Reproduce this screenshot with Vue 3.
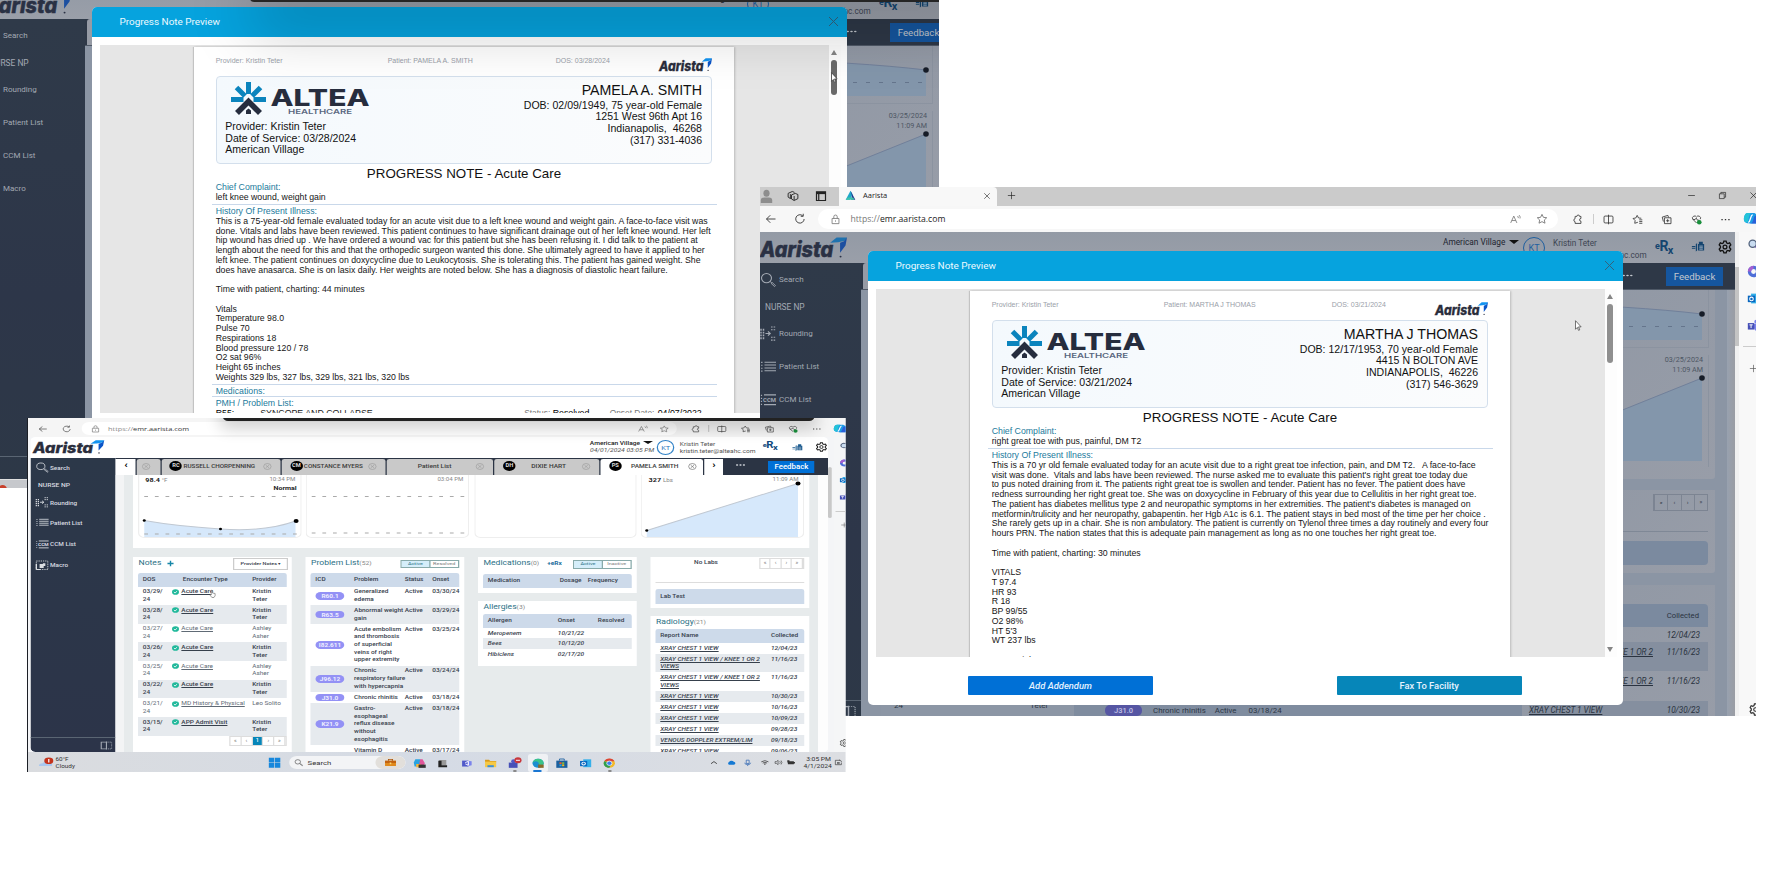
<script setup>
import { h } from 'vue'

const s = (d, extra = {}) => h('path', { d, fill: 'none', stroke: 'currentColor', 'stroke-width': 1.2, ...extra })
const f = (d, fill = 'currentColor') => h('path', { d, fill })
const icons = {
  back: () => [s('M14 8H2M7 3L2 8l5 5')],
  reload: () => [s('M13.5 8A5.6 5.6 0 1 1 11.5 3.6M12.3 1v3.4H9')],
  lock: () => [s('M3 6.5h10v7.5H3zM5.5 6.5V4a2.5 2.5 0 0 1 5 0v2.5'), f('M7.2 9.4h1.6V11H7.2z')],
  read: () => [s('M1 13L5.5 3 10 13M2.6 9.5h5.8M11 3c1 .8 1.2 2 1 3M13 1.5c1.8 1.5 2 3.500 1.500 5')],
  star: () => [s('M8 1.800l1.900 4 4.400.5-3.200 3 .9 4.300L8 11.500l-4 2.100.9-4.300-3.200-3 4.400-.5z')],
  puzzle: () => [s('M5 3.500h2a2 2 0 0 1 4 0h2v3a2 2 0 0 0 0 4v3.200H4.500v-2.500a2.300 2.300 0 0 1 0-4.500V3.500z')],
  split: () => [s('M1.500 4.500A1.500 1.500 0 0 1 3 3h10a1.500 1.500 0 0 1 1.500 1.500v7A1.500 1.500 0 0 1 13 13H3a1.500 1.500 0 0 1-1.500-1.500zM8 1v14')],
  favs: () => [s('M8.500 12L4 13.500l.5-4L1.500 6.500l4-.7L7.500 2l2 3.800 4 .4M10.500 8.500H15M10.500 11H15M10.500 13.500H15')],
  collect: () => [s('M5 5.500h9.500v8.500H5zM9.700 7.500v4.500M7.500 9.800H12M3.500 11L1.800 4.500 10 2l1 3')],
  heart: () => [s('M8 13L2.500 7.500a3 3 0 0 1 5.500-3 3 3 0 0 1 5.500 3M3 8h3l1.500-2 2 3H12'), h('circle', { cx: 12, cy: 12, r: 3.400, fill: '#1a8f3c' })],
  dots: () => [f('M2 7.200h2v1.800H2zM7 7.200h2v1.800H7zM12 7.200h2v1.800h-2z')],
  more: () => [2.5, 8, 13.5].map((cx) => h('circle', { cx, cy: 8, r: 1.9, fill: 'currentColor' })),
  copilot: () => [f('M5 1h8l3 2v10H8C4 13 1 12 1 8c0-2 1-7 4-7z', '#1c9be6'), f('M1 8c0-2 1-7 4-7h4C6 4 7 9 5 12 2 12 1 10 1 8z', '#24c3d8'), f('M8 13c2 0 3-1 4-5s2-4 4-4v9z', '#2b5fd8'), s('M6 12c3-1 2-8 5-9', { stroke: '#fff', 'stroke-width': 1.5 })],
  people: () => [h('circle', { cx: 8, cy: 4.500, r: 3.800, fill: '#8d8d8d' }), f('M1 15V12q0-3 4-3h6q4 0 4 3v3z', '#8d8d8d')],
  stack: () => [s('M6 6.500l5-2 3.500 1.500v5.500l-5 2.500L6 12zM9.500 8v5.500M4 11L1.500 9.500V4.500L7 2l3 1.200M4.500 5.500V12')],
  panel: () => [s('M2 2.500h12v11.500H2zM5 5v9', { 'stroke-width': 1.600 }), f('M2 2.500h12v3H2z')],
  favicon: () => [f('M8 1l3 5-4 8H1z', '#1fa6c9'), f('M8 1l7 13H9l1-6z', '#22348c'), f('M4 11h8l1.500 3H1z', '#3cc3a8')],
  x: () => [s('M2.500 2.500l11 11M13.500 2.500l-11 11')],
  plus: () => [s('M8 1.500v13M1.500 8h13')],
  minus: () => [s('M2 8h12')],
  restore: () => [s('M2.500 5h8.500v8.500H2.500zM5 5V2.500h8.500v8.500H11')],
  search: () => [h('circle', { cx: 6.500, cy: 6.500, r: 5, fill: 'none', stroke: 'currentColor', 'stroke-width': 1.100 }), s('M10 10l1.500 1.500M11 12l1-1 3.500 3.500-1 1z', { 'stroke-width': .9 })],
  rounding: () => [s('M1 3v11M3.500 3v11', { 'stroke-dasharray': '2 1', 'stroke-width': 1.500 }), s('M5.500 8h4.500M8 5.800L10.200 8 8 10.200'), s('M11 1h4.500M11 4h4.500M11 12h4.500M11 15h4.500', { 'stroke-dasharray': '1.600 1' })],
  list: () => [s('M4.500 3.500H16M4.500 6.500H16M4.500 9.500H16M4.500 12.500H16', { 'stroke-width': 1.100 }), s('M1.800 3v10.500', { 'stroke-dasharray': '1.200 1.900', 'stroke-width': 1.400 })],
  ccm: () => [s('M4 3H16M4 13.500H16'), s('M1.500 3v11', { 'stroke-dasharray': '1.200 2' }), h('text', { x: 3, y: 10.800, 'font-size': 6, 'font-weight': 700, fill: 'currentColor', textLength: 13, lengthAdjust: 'spacingAndGlyphs', 'font-family': 'Roboto' }, 'CCM')],
  macro: () => [s('M1 1.500h14v13H1z', { 'stroke-dasharray': '1.500 1.200' }), s('M1 14.500V6M1 14.500h5', { 'stroke-width': 1.600 }), f('M5 6h4V5h3v4h-2v3H5z')],
  collapse: () => [s('M1 2h7v12H1zM8 1v14', { 'stroke-width': 1.500 }), s('M8 2h7v12H8', { 'stroke-dasharray': '1.500 1' })],
  gear: () => [h('circle', { cx: 8, cy: 8, r: 2.200, fill: 'none', stroke: 'currentColor', 'stroke-width': 1.400 }), s('M6.700 1.200h2.600l.5 2 1.500.8 2-.7 1.300 2.300-1.400 1.500v1.800l1.400 1.500-1.300 2.300-2-.7-1.500.8-.5 2H6.700l-.5-2-1.500-.8-2 .7-1.300-2.300 1.400-1.500V7.100L1.400 5.600l1.300-2.300 2 .7 1.500-.8z', { 'stroke-width': 1.500 })],
  fax: () => [f('M5.500 5l1.500-1v9l-1.500 1zM8 5h1V2h4.500v3H15v8H8z'), f('M1 7.500h4v1.500H1zM1 10h4v1.200H1z'), s('M9.500 7.500h4M9.500 9.500h4M9.500 11.300h4', { stroke: '#b8c4d2', 'stroke-width': .9 })],
  check: () => [h('circle', { cx: 8, cy: 8, r: 7.500, fill: '#1fb89a' }), s('M4.500 8.200l2.500 2.500 4.500-5', { stroke: '#fff', 'stroke-width': 2 })],
  closeTab: () => [h('circle', { cx: 8, cy: 8, r: 6.800, fill: 'none', stroke: 'currentColor', 'stroke-width': 1.300 }), s('M5 5l6 6M11 5l-6 6')],
  hand: () => [h('path', { d: 'M6 8V2.500q1-1 2 0V7l5 1v4l-2 3H7L3.500 10.500q0-1.500 2.500-.5z', fill: '#fff', stroke: '#555', 'stroke-width': 1 })],
  arrow: () => [h('path', { d: 'M4 1l9 9H8.800l2 4.300-1.900.8-2-4.300L4 13.500z', fill: '#fff', stroke: '#333', 'stroke-width': 1 })],
  mag: () => [h('circle', { cx: 7, cy: 7, r: 4.500, fill: '#c9dcf0', stroke: '#53637d', 'stroke-width': 1.600 }), s('M10.500 10.500L15 15', { stroke: '#6a4fae', 'stroke-width': 2 })],
  loop: () => [h('circle', { cx: 8, cy: 8, r: 5, fill: 'none', stroke: '#4f6fd8', 'stroke-width': 4 }), s('M3 8a5 5 0 0 1 5-5', { stroke: '#a65fd0', 'stroke-width': 4 })],
  outlook: () => [f('M5 2h10v12H5z', '#35b0ea'), f('M1 4.500h9v8H1z', '#0a67bf'), h('circle', { cx: 5.500, cy: 8.500, r: 2.200, fill: 'none', stroke: '#fff', 'stroke-width': 1.300 })],
  teams: () => [h('circle', { cx: 11.500, cy: 3.500, r: 2.500, fill: '#7b83eb' }), f('M6 6h9v6q-2 3-5 2z', '#7b83eb'), f('M1 5h8v8H1z', '#4650b8'), s('M3 7.200h4M5 7.200v4', { stroke: '#fff' })],
  win: () => [f('M1 1h6.600v6.600H1zM8.400 1H15v6.600H8.400zM1 8.400h6.600V15H1zM8.400 8.400H15V15H8.400z', '#1787dc')],
  brief: () => [f('M1 5h14v9H1z', '#e08a1c'), f('M1 5h14v4H1z', '#c2620f'), s('M5.500 5V2.500h5V5', { stroke: '#b05a10', 'stroke-width': 1.500 }), f('M7 8h2v3H7z', '#f7d774')],
  copilotPre: () => [f('M3 2h6l2 4-5 7H2L1 7z', '#29a3e0'), f('M9 2h3l3 6-3 6H7z', '#e2569b'), f('M4 9h6l-2 5H4z', '#f3b53a'), f('M7 10h9v5H7z', '#333')],
  task: () => [f('M3 3h9v8H3z', '#999'), f('M2 11h11v3H2zM2 4h4v10H2z', '#222')],
  chat: () => [f('M2 4h8v9H2z', '#5059c9'), f('M8 4l6 1v6l-6 2z', '#7b83eb'), s('M6 7l4-2v6L6 9', { stroke: '#fff' })],
  folder: () => [f('M1 2.500h5l1.500 2H15v2H1z', '#d99a1a'), f('M1 5.500h14V14H1z', '#f6c945'), f('M4 11h8v3H4z', '#3d8fd8')],
  teamsBusy: () => [h('circle', { cx: 7, cy: 5, r: 3, fill: '#5059c9' }), f('M1 7h11v8H1z', '#4650b8'), h('circle', { cx: 12.5, cy: 3.5, r: 4.5, fill: '#c8373c' }), s('M10 3.500h5', { stroke: '#fff', 'stroke-width': 1.500 })],
  edge: () => [h('circle', { cx: 8, cy: 8, r: 7, fill: '#1b8fd0' }), f('M1 8a7 7 0 0 1 14 0q0 3-4 3-3 0-2-3-1-3-4-3-3 0-4 3z', '#3bc48a'), f('M8 10h7v5H8z', '#8a6a2a')],
  store: () => [f('M1 4h14v11H1z', '#1b5f9e'), s('M5 4V1.500h6V4', { stroke: '#1b5f9e' }), f('M5 6.500h2.700v2.700H5z', '#f05a28'), f('M8.300 6.500H11v2.700H8.300z', '#7db93f'), f('M5 9.800h2.700v2.700H5z', '#2aa7e0'), f('M8.300 9.800H11v2.700H8.300z', '#f9ba16')],
  chrome: () => [h('circle', { cx: 8, cy: 8, r: 7, fill: '#f2b92a' }), f('M1.500 5A7 7 0 0 1 14.500 5H8z', '#dc4437'), f('M1.500 5A7 7 0 0 0 8 15l2-5-2-3z', '#2f9e4f'), h('circle', { cx: 8, cy: 8, r: 3.300, fill: '#3b7ded', stroke: '#fff', 'stroke-width': 1 })],
  up: () => [s('M3 10l5-4.500 5 4.500', { 'stroke-width': 1.600 })],
  cloud: () => [f('M4 12.500a3.500 3.500 0 0 1 0-6A4.500 4.500 0 0 1 12 6a3.300 3.300 0 0 1 0 6.500z', '#1579d3')],
  mic: () => [s('M5.500 2.500h5v7h-5zM3 8q0 4 5 4t5-4M8 12v3', { stroke: '#3c6fb5', 'stroke-width': 1.500 })],
  wifi: () => [s('M1.500 6.500Q8 1 14.500 6.500M4 9.300Q8 6 12 9.300', { 'stroke-width': 1.500 }), f('M6 11l2 2.500L10 11Q8 9.800 6 11z')],
  sound: () => [s('M1.500 6h2.500l3-3v10l-3-3H1.500zM10 5q2 3 0 6M12.500 3.500q3 4.500 0 9')],
  battery: () => [f('M2 5h11v7H2zM13 7h2v3h-2zM1 3h4v5H1z')],
  bell: () => [s('M2 3h9M2 3v10h11V8M9 2l5 4M5 8h5M5 10.500h5', { 'stroke-width': 1.300 })],
  weather: () => [f('M1 13q0-4 4-4 3-5 8-2l2 2v4z', '#a9c8f0'), h('circle', { cx: 11.500, cy: 5.500, r: 4.800, fill: '#c4341d' }), s('M11.500 3v5', { stroke: '#fff', 'stroke-width': 1.300 })],
}
const Icon = (p) => h('svg', { viewBox: '0 0 16 16', preserveAspectRatio: 'none' }, icons[p.name]())
Icon.props = ['name']

const Brand = (p) => h('svg', { viewBox: '0 0 88 23', preserveAspectRatio: 'none' }, [
  h('text', { x: 0, y: 21.300, 'font-family': 'Inter, sans-serif', 'font-weight': 800, 'font-style': 'italic', 'font-size': 22, textLength: 74, lengthAdjust: 'spacingAndGlyphs', fill: p.ink, stroke: p.ink, 'stroke-width': .5 }, 'Aarista'),
  h('path', { d: 'M71 6L77.500.5H88L86 4 79 5.500z', fill: p.light }),
  h('path', { d: 'M88 .5L86.500 9 81 16.500V6L85 4.500z', fill: p.deep }),
  h('circle', { cx: 81.500, cy: 20.500, r: 1, fill: p.ink }),
])
Brand.props = ['ink', 'light', 'deep']

const Altea = () => h('svg', { viewBox: '0 0 139 33' }, [
  h('g', { stroke: '#0b84bd', 'stroke-width': 5 }, [
    h('path', { d: 'M17.500 0v12M0 17.500h12.500M22.500 17.500h12.500M5.500 5.500l8.500 8.500M29.500 5.500l-8.500 8.500' }),
  ]),
  h('path', { d: 'M6 31L17.500 19.500 29 31', fill: 'none', stroke: '#262d3e', 'stroke-width': 5.6 }),
  h('path', { d: 'M15 32v-3.500l2.500-2 2.500 2v3.500z', fill: '#262d3e' }),
  h('text', { x: 39.500, y: 24, 'font-family': 'Inter, sans-serif', 'font-weight': 800, 'font-size': 22.500, textLength: 99, lengthAdjust: 'spacingAndGlyphs', fill: '#262d3e' }, 'ALTEA'),
  h('text', { x: 57, y: 32.200, 'font-family': 'Inter, sans-serif', 'font-weight': 600, 'font-size': 6.300, textLength: 64, lengthAdjust: 'spacingAndGlyphs', fill: '#596780' }, 'HEALTHCARE'),
])

const previews = [
  {
    id: 'pamela', patient: 'PAMELA A. SMITH', date: '03/28/2024',
    address: ['DOB: 02/09/1949, 75 year-old Female', '1251 West 96th Apt 16', 'Indianapolis,\u00a0 46268', '(317) 331-4036'],
    complaint: 'left knee wound, weight gain',
    history: [
      'This is a 75-year-old female evaluated today for an acute visit due to a left knee wound and weight gain. A face-to-face visit was',
      'done. Vitals and labs have been reviewed. This patient continues to have significant drainage out of her left knee wound. Her left',
      'hip wound has dried up . We have ordered a wound vac for this patient but she has been refusing it. I did talk to the patient at',
      'length about the need for this and that the orthopedic surgeon wanted this done. She ultimately agreed to have it applied to her',
      'left knee. The patient continues on doxycycline due to Leukocytosis. She is tolerating this. The patient has gained weight. She',
      'does have anasarca. She is on lasix daily. Her weights are noted below. She has a diagnosis of diastolic heart failure.',
      '', 'Time with patient, charting: 44 minutes', '', 'Vitals', 'Temperature 98.0', 'Pulse 70', 'Respirations 18',
      'Blood pressure 120 / 78', 'O2 sat 96%', 'Height 65 inches', 'Weights 329 lbs, 327 lbs, 329 lbs, 321 lbs, 320 lbs',
    ],
    problems: true,
  },
  {
    id: 'martha', patient: 'MARTHA J THOMAS', date: '03/21/2024',
    address: ['DOB: 12/17/1953, 70 year-old Female', '4415 N BOLTON AVE', 'INDIANAPOLIS,\u00a0 46226', '(317) 546-3629'],
    complaint: 'right great toe with pus, painful, DM T2',
    history: [
      'This is a 70 yr old female evaluated today for an acute visit due to a right great toe infection, pain, and DM T2.\u00a0\u00a0 A face-to-face',
      'visit was done.\u00a0 Vitals and labs have been reviewed. The nurse asked me to evaluate this patient\'s right great toe today due',
      'to pus noted draining from it. The patients right great toe is swollen and tender. Patient has no fever. The patient does have',
      'redness surrounding her right great toe. She was on doxycycline in February of this year due to Cellulitis in her right great toe.',
      'The patient has diabetes mellitus type 2 and neuropathic symptoms in her extremities. The patient\'s diabetes is managed on',
      'metformin/trulicity and her neuropathy, gabapentin. her Hgb A1c is 6.1. The patient stays in bed most of the time per her choice .',
      'She rarely gets up in a chair. She is non ambulatory. The patient is currently on Tylenol three times a day routinely and every four',
      'hours PRN. The nation states that this is adequate pain management as long as no one touches her right great toe.',
      '', 'Time with patient, charting: 30 minutes', '', 'VITALS', 'T 97.4', 'HR 93', 'R 18', 'BP 99/55', 'O2 98%', 'HT 5\'3', 'WT 237 lbs', '',
      '\u00a0\u00a0\u00a0\u00a0\u00a0\u00a0\u00a0\u00a0weights: 23, 24, 23, 137, 112, 157',
    ],
    problems: false,
  },
]

const nav = [['rounding', 'Rounding'], ['list', 'Patient List'], ['ccm', 'CCM List'], ['macro', 'Macro']]
const browserIcons = ['split', 'favs', 'collect', 'heart', 'dots']
const studies = [['XRAY CHEST 1 VIEW', '12/04/23'], ['XRAY CHEST 1 VIEW / KNEE 1 OR 2', '11/16/23', 'VIEWS'], ['XRAY CHEST 1 VIEW / KNEE 1 OR 2', '11/16/23', 'VIEWS'], ['XRAY CHEST 1 VIEW', '10/30/23']]
const radiology = [...studies, ['XRAY CHEST 1 VIEW', '10/16/23'], ['XRAY CHEST 1 VIEW', '10/09/23'], ['XRAY CHEST 1 VIEW', '09/28/23'], ['VENOUS DOPPLER EXTREM/LIM', '09/18/23'], ['XRAY CHEST 1 VIEW', '09/06/23']]
const tabs = [
  { c: 't0', label: '' }, { c: 't1', who: 'RC', label: 'RUSSELL CHORPENNING' }, { c: 't2', who: 'CM', label: 'CONSTANCE MYERS' },
  { c: 't3', label: 'Patient List' }, { c: 't4', who: 'DH', label: 'DIXIE HART' }, { c: 't5', who: 'PS', label: 'PAMELA SMITH' },
]
const notes = [
  ['03/29/', 'Acute Care', 'Kristin', 'Teter', 1], ['03/28/', 'Acute Care', 'Kristin', 'Teter', 1], ['03/27/', 'Acute Care', 'Ashley', 'Asher', 0],
  ['03/26/', 'Acute Care', 'Kristin', 'Teter', 1], ['03/25/', 'Acute Care', 'Ashley', 'Asher', 0], ['03/22/', 'Acute Care', 'Kristin', 'Teter', 1],
  ['03/21/', 'MD History & Physical', 'Leo Solito', '', 0], ['03/15/', 'APP Admit Visit', 'Kristin', 'Teter', 1],
]
const problems = [
  ['R60.1', ['Generalized', 'edema'], '03/30/24'], ['R63.5', ['Abnormal weight', 'gain'], '03/29/24'],
  ['I82.611', ['Acute embolism', 'and thrombosis', 'of superficial', 'veins of right', 'upper extremity'], '03/25/24'],
  ['J96.12', ['Chronic', 'respiratory failure', 'with hypercapnia'], '03/24/24'], ['J31.0', ['Chronic rhinitis'], '03/18/24'],
  ['K21.9', ['Gastro-', 'esophageal', 'reflux disease', 'without', 'esophagitis'], '03/18/24'], ['', ['Vitamin D'], '03/17/24'],
]
const allergies = [['Meropenem', '10/21/22'], ['Bees', '10/12/20'], ['Hibiclens', '02/17/20']]
const taskIcons = ['copilotPre', 'task', 'chat', 'folder', 'teamsBusy', 'edge', 'store', 'outlook', 'chrome']
</script>

<template>
  <main class="desk">
    <section v-for="p in previews" :key="p.id" class="win" :class="p.id">
      <div class="stage">
        <div class="titlebar">
          <Icon name="people" class="i16" /><Icon name="stack" class="i12" /><Icon name="panel" class="i12" />
          <div class="tab"><Icon name="favicon" class="i11" /><span>Aarista</span><Icon name="x" class="i7" /></div>
          <Icon name="plus" class="i9" />
          <div class="controls"><Icon name="minus" class="i9" /><Icon name="restore" class="i9" /><Icon name="x" class="i9" /></div>
        </div>
        <div class="address">
          <Icon name="back" class="i12" /><Icon name="reload" class="i12 rl" />
          <div class="pill"><Icon name="lock" class="i11" /><span class="url"><i>https://</i>emr.aarista.com</span><Icon name="read" class="i11 push" /><Icon name="star" class="i12" /></div>
          <Icon name="puzzle" class="i11 pz" /><b class="vbar"></b>
          <div class="tools"><Icon v-for="n in browserIcons" :key="n" :name="n" class="i11" /></div>
          <Icon name="copilot" class="i14" />
        </div>
        <div class="body">
          <div class="app">
            <header class="top">
              <Brand class="brand" ink="#2a3144" light="#1f72ae" deep="#1c4fa0" />
              <div class="site">American Village <em></em></div>
              <div class="avatar">KT</div>
              <div class="who"><span>Kristin Teter</span><span>kristin.teter@alteahc.com</span></div>
              <div class="rx"><small>e</small>R<sub>x</sub></div><Icon name="fax" class="fax" /><Icon name="gear" class="gear" />
            </header>
            <div class="cols">
              <nav class="side">
                <div class="srow search"><Icon name="search" /><span>Search</span></div>
                <div class="srow head">NURSE NP</div>
                <div v-for="n in nav" :key="n[1]" class="srow"><Icon :name="n[0]" /><span>{{ n[1] }}</span></div>
                <div class="sfoot"><Icon name="collapse" /></div>
              </nav>
              <div class="main">
                <div class="navbar"><i class="sliver"></i><Icon name="more" class="more" /><span class="feedback">Feedback</span></div>
                <div class="content">
                  <div class="lower">
                    <div class="lnotes"><span>24</span><span>Teter</span></div>
                    <div class="lprob"><b>J31.0</b><span>Chronic rhinitis</span><span>Active</span><span>03/18/24</span></div>
                  </div>
                  <div class="right">
                    <div class="card vit">
                      <svg viewBox="0 0 190 189" class="chart">
                        <path d="M0 13Q110 16 177 24V50H0z" fill="#8396ab" /><path d="M0 13Q110 16 177 24" fill="none" stroke="#71809a" />
                        <path d="M0 36.500h177" stroke="#65758c" stroke-dasharray="4 9" /><path d="M183.500 0v58M0 57.500h183" stroke="#8b93a0" fill="none" />
                        <circle cx="177" cy="24" r="2.800" fill="#161c27" /><path d="M183.500 65v112" stroke="#8b93a0" />
                        <path d="M0 158L100 119 177 88V171H0z" fill="#8396ab" /><path d="M0 158L100 119 177 88" stroke="#71809a" fill="none" /><circle cx="177" cy="88" r="2.800" fill="#161c27" />
                      </svg>
                      <div class="stamp"><span>03/25/2024</span><span>11:09 AM</span></div>
                    </div>
                    <div class="card labs"><div class="pager"><i>«</i><i>‹</i><i>›</i><i>»</i></div><hr /><div class="bar"></div></div>
                    <div class="card rad">
                      <div class="bar"><span>Collected</span></div>
                      <div v-for="(r, i) in studies" :key="i" class="rrow" :class="{ tall: r[2] }"><u>{{ r[0] }}</u><span>{{ r[1] }}</span></div>
                    </div>
                  </div>
                  <i class="gutter"></i>
                </div>
              </div>
            </div>
          </div>
          <div class="vscroll"><i></i></div>
          <div class="rail"><Icon name="mag" /><Icon name="loop" /><Icon name="outlook" /><Icon name="teams" /><hr /><Icon name="plus" class="pl" /><Icon name="gear" class="gr" /></div>
        </div>
        <div class="strip"><i></i></div>

        <div class="modal">
          <div class="mhead"><span>Progress Note Preview</span><Icon name="x" /></div>
          <div class="viewer">
            <div class="well">
              <article class="page">
                <div class="run"><span>Provider: Kristin Teter</span><span>Patient: {{ p.patient }}</span><span>DOS: {{ p.date }}</span><Brand class="pbrand" ink="#2a2d3c" light="#1293f0" deep="#0a55c8" /></div>
                <div class="card-id">
                  <div class="prov"><Altea class="altea" /><span>Provider: Kristin Teter</span><span>Date of Service: {{ p.date }}</span><span>American Village</span></div>
                  <div class="pat"><strong>{{ p.patient }}</strong><span v-for="a in p.address" :key="a">{{ a }}</span></div>
                </div>
                <h1>PROGRESS NOTE - Acute Care</h1>
                <div class="sec first"><h2>Chief Complaint:</h2><p>{{ p.complaint }}</p></div>
                <div class="sec hist"><h2>History Of Present Illness:</h2><p v-for="(l, i) in p.history" :key="i">{{ l }}</p></div>
                <template v-if="p.problems">
                  <div class="sec meds"><h2>Medications:</h2></div>
                  <div class="sec pmh"><h2>PMH / Problem List:</h2><div class="prow"><b>R55:</b><span>SYNCOPE AND COLLAPSE</span><i>Status:</i><b>Resolved</b><i>Onset Date:</i><b>04/07/2022</b></div></div>
                </template>
              </article>
            </div>
            <div class="track"><i class="au"></i><i class="thumb"></i><i class="ad"></i></div>
          </div>
          <div class="mfoot"><button class="b1">Add Addendum</button><button class="b2">Fax To Facility</button></div>
          <Icon name="arrow" class="cursor" />
        </div>
      </div>
      <div v-if="p.problems" class="share"></div>
    </section>

    <section class="chart-win">
      <div class="cw">
        <div class="caddr">
          <Icon name="back" /><Icon name="reload" />
          <div class="cpill"><Icon name="lock" /><span><i>https://</i>emr.aarista.com</span><Icon name="read" class="push" /><Icon name="star" /></div>
          <Icon name="puzzle" class="cpz" /><b></b>
          <div class="ctools"><Icon v-for="n in browserIcons" :key="n" :name="n" /></div><Icon name="copilot" class="ccp" />
        </div>
        <div class="cbody">
          <div class="capp">
            <header class="chead">
              <Brand class="cbrand" ink="#2a2d3c" light="#1293f0" deep="#0a55c8" />
              <div class="csite"><span>American Village <em></em></span><i>04/01/2024 03:05 PM</i></div>
              <div class="cav">KT</div>
              <div class="cwho"><span>Kristin Teter</span><span>kristin.teter@alteahc.com</span></div>
              <div class="crx"><small>e</small>R<sub>x</sub></div><Icon name="fax" class="cfax" /><Icon name="gear" class="cgear" />
            </header>
            <div class="ccols">
              <nav class="cside">
                <div class="srow search"><Icon name="search" /><span>Search</span></div>
                <div class="srow head">NURSE NP</div>
                <div v-for="n in nav" :key="n[1]" class="srow"><Icon :name="n[0]" /><span>{{ n[1] }}</span></div>
                <div class="sfoot"><Icon name="collapse" /></div>
              </nav>
              <div class="cmain">
                <div class="ctabs">
                  <span class="step">‹</span>
                  <span v-for="t in tabs" :key="t.c" class="ctab" :class="t.c"><b v-if="t.who">{{ t.who }}</b><span v-if="t.label">{{ t.label }}</span><Icon name="closeTab" /></span>
                  <span class="step nx">›</span><Icon name="more" class="cmore" /><span class="cfb">Feedback</span>
                </div>
                <div class="cscroll">
                  <div class="vitals">
                    <div class="vcard">
                      <svg viewBox="0 0 131 63" preserveAspectRatio="none"><path d="M5 45.500Q30 51 66 54T126 46V62H5z" fill="#d6e8fb" /><path d="M5 45.500Q30 51 66 54T126 46" fill="none" stroke="#c0c8d2" /><path d="M5 21.500h122M5 59h122" stroke="#aaa" stroke-dasharray="3 5.500" /><circle cx="5" cy="45.500" r="1.200" /><circle cx="66" cy="54" r="1.200" /><circle cx="126.500" cy="46" r="2" /></svg>
                      <div class="vt"><strong>98.4 <small>°F</small></strong><span>10:34 PM<b>Normal</b></span></div>
                    </div>
                    <div class="vcard">
                      <svg viewBox="0 0 131 63" preserveAspectRatio="none"><path d="M5 21.500h122M5 58h122" stroke="#aaa" stroke-dasharray="3 5.500" /></svg>
                      <div class="vt"><span>03:04 PM</span></div>
                    </div>
                    <div class="vcard"></div>
                    <div class="vcard">
                      <svg viewBox="0 0 131 63" preserveAspectRatio="none"><path d="M5 55.500L126 8.500V62H5z" fill="#d6e8fb" /><path d="M5 55.500L126 8.500" stroke="#c0c8d2" /><circle cx="5" cy="55.500" r="1.200" /><circle cx="126" cy="8.500" r="2" /></svg>
                      <div class="vt"><strong>327 <small>Lbs</small></strong><span>11:09 AM</span></div>
                    </div>
                  </div>
                  <div class="panels">
                    <div class="panel pnotes">
                      <div class="ph"><h3>Notes</h3><Icon name="plus" class="add" /><span class="drop">Provider Notes ▾</span></div>
                      <div class="th g-notes"><span>DOS</span><span>Encounter Type</span><span>Provider</span></div>
                      <div v-for="(n, i) in notes" :key="i" class="tr g-notes" :class="{ alt: i % 2, lite: !n[4] }"><span>{{ n[0] }}<br />24</span><span class="enc"><Icon name="check" /><u>{{ n[1] }}</u></span><span>{{ n[2] }}<br />{{ n[3] }}</span></div>
                      <div class="pg"><i>«</i><i>‹</i><i class="on">1</i><i>›</i><i>»</i></div>
                      <Icon name="hand" class="hand" />
                    </div>
                    <div class="panel pprob">
                      <div class="ph"><h3>Problem List<small>(52)</small></h3><span class="tog"><i class="on">Active</i><i>Resolved</i></span></div>
                      <div class="th g-prob"><span>ICD</span><span>Problem</span><span>Status</span><span>Onset</span></div>
                      <div v-for="(r, i) in problems" :key="i" class="tr g-prob" :class="{ alt: i % 2 }"><span class="code"><b v-if="r[0]">{{ r[0] }}</b></span><span><template v-for="l in r[1]" :key="l">{{ l }}<br /></template></span><span>Active</span><span>{{ r[2] }}</span></div>
                    </div>
                    <div class="stackp">
                      <div class="panel pmeds">
                        <div class="ph"><h3>Medications<small>(0)</small></h3><span class="miniRx">+eRx</span><span class="tog"><i class="on">Active</i><i>Inactive</i></span></div>
                        <div class="th g-med"><span>Medication</span><span>Dosage</span><span>Frequency</span></div>
                      </div>
                      <div class="panel pall">
                        <div class="ph"><h3>Allergies<small>(3)</small></h3></div>
                        <div class="th g-all"><span>Allergen</span><span>Onset</span><span>Resolved</span></div>
                        <div v-for="(a, i) in allergies" :key="i" class="tr g-all" :class="{ alt: i % 2 }"><span>{{ a[0] }}</span><span>{{ a[1] }}</span></div>
                      </div>
                    </div>
                    <div class="stackp">
                      <div class="panel plabs">
                        <div class="nolabs"><span>No Labs</span><div class="pg"><i>«</i><i>‹</i><i>›</i><i>»</i></div></div><hr />
                        <div class="th"><span>Lab Test</span></div>
                      </div>
                      <div class="panel prad">
                        <div class="ph"><h3>Radiology<small>(21)</small></h3></div>
                        <div class="th g-rad"><span>Report Name</span><span>Collected</span></div>
                        <div v-for="(r, i) in radiology" :key="i" class="tr g-rad" :class="{ alt: i % 2 }"><u>{{ r[0] }}<template v-if="r[2]"><br />{{ r[2] }}</template></u><span>{{ r[1] }}</span></div>
                      </div>
                    </div>
                  </div>
                </div>
              </div>
            </div>
          </div>
          <div class="cvs"><i></i></div>
          <div class="crail"><Icon name="mag" /><Icon name="loop" /><Icon name="outlook" /><Icon name="teams" /><hr /><Icon name="plus" class="pl" /><Icon name="gear" class="gr" /></div>
        </div>
        <div class="taskbar">
          <Icon name="weather" class="wi" /><div class="wt"><span>60°F</span><span>Cloudy</span></div>
          <Icon name="win" class="start" />
          <div class="find"><Icon name="search" /><span>Search</span><b><Icon name="brief" /></b></div>
          <div class="apps"><span v-for="t in taskIcons" :key="t" :class="{ open: t === 'edge', run: t === 'teamsBusy' || t === 'chrome' }"><Icon :name="t" /></span></div>
          <div class="tray"><Icon v-for="t in ['up', 'cloud', 'mic']" :key="t" :name="t" /></div>
          <div class="tray2"><Icon v-for="t in ['wifi', 'sound', 'battery']" :key="t" :name="t" /></div>
          <div class="clock"><span>3:05 PM</span><span>4/1/2024</span></div><Icon name="bell" class="bell" />
        </div>
        <div class="share3"></div>
      </div>
    </section>
  </main>
</template>

<style>
body { margin: 0; background: #fff; }
</style>

<style scoped>
* { box-sizing: border-box; }
svg { display: block; flex: none; overflow: visible; }
i, em { font-style: normal; }
.desk { position: relative; width: 1781px; height: 870px; overflow: hidden; background: #fff; font-family: Roboto, "Liberation Sans", sans-serif; }
.win { position: absolute; overflow: hidden; }
.pamela { left: 0; top: 0; width: 939px; height: 488px; }
.martha { left: 760px; top: 187px; width: 996px; height: 529px; }
.stage { position: relative; width: 997px; height: 545px; display: flex; flex-direction: column; }
.pamela .stage { margin: -57px 0 0 -16px; }

.i16 { width: 13px; height: 15px; } .i12 { width: 12px; height: 12px; } .i11 { width: 11px; height: 11px; } .i14 { width: 14px; height: 14px; }
.i9 { width: 9px; height: 9px; } .i7 { width: 8px; height: 8px; }
.titlebar { height: 19px; flex: none; background: #cbcbcb; display: flex; align-items: center; color: #222; }
.titlebar > .i12 { margin-left: 14px; margin-top: -1px; } .titlebar > .i12 + .i12 { margin-left: 16px; }
.tab { margin-left: 12px; width: 158px; height: 19px; background: #f8f8f8; border-radius: 0 4px 0 0; display: flex; align-items: center; padding: 0 6px; font: 8px "Open Sans", sans-serif; }
.tab span { margin-left: 7px; flex: 1; font-size: 7.500px; margin-top: -3px; }
.tab svg { margin-top: -2px; }
.titlebar > .i9 { margin-left: 10px; margin-top: -2px; }
.controls { margin-left: auto; display: flex; gap: 22px; margin-right: -1px; margin-top: -3px; }
.address { height: 26px; flex: none; background: #f7f7f7; display: flex; align-items: center; color: #333; }
.address > .i12:first-child { margin-left: 5px; }
.rl { margin-left: 17px; }
.pill { margin-left: 12px; width: 740px; height: 20px; border-radius: 10px; background: #fff; display: flex; align-items: center; padding: 0 10px 0 12px; color: #777; }
.url { margin-left: 9.500px; font: 8.650px "Open Sans", sans-serif; color: #222; }
.url i { color: #777; }
.push { margin-left: auto; margin-right: 15px; }
.pz { margin-left: 14px; } .vbar { width: 1px; height: 10px; background: #ccc; margin: 0 9px 0 10px; }
.tools { display: flex; gap: 18.200px; }
.address .i14 { margin-left: 12px; }
.body { display: flex; height: 490.500px; flex: none; }
.strip { flex: 1; background: #c6c8cc; border-top: 1px solid #e0e0e0; padding-left: 14px; }
.strip i { display: block; width: 9px; height: 9px; border-radius: 50%; background: #c8402c; margin-top: 5px; }

.app { width: 975px; display: flex; flex-direction: column; background: #8b95a4; }
.top { height: 31px; background: linear-gradient(#939aa5, #9a9fa9); display: flex; align-items: flex-start; position: relative; color: #1d2430; }
.brand { width: 87px; height: 22px; margin: 5px 0 0 0; }
.site { margin-left: 596px; padding-top: 5px; font-size: 8.300px; white-space: nowrap; width: 75px; }
.site em { display: inline-block; border: 5px solid transparent; border-top: 4px solid #111; border-bottom: 0; margin-left: 2px; vertical-align: 1px; }
.avatar { width: 22px; height: 22px; border: 1.200px solid #1f5f9f; border-radius: 50%; margin: 5px 0 0 5px; color: #1f5f9f; font-size: 9px; line-height: 20px; text-align: center; flex: none; }
.who { margin-left: 8px; padding-top: 5px; width: 91px; font-size: 8.200px; color: #3d4452; display: flex; flex-direction: column; line-height: 12px; white-space: nowrap; flex: none; }
.rx, .crx { font-weight: 700; color: #15456f; }
.rx { margin: 5px 0 0 11px; font-size: 14px; line-height: 18px; width: 18px; white-space: nowrap; letter-spacing: -.5px; }
.rx small { font-size: 9px; vertical-align: 2px; } .rx sub { font-size: 11px; vertical-align: -3px; }
.fax { width: 14px; height: 13px; margin: 8px 0 0 18px; color: #15456f; }
.gear { width: 14px; height: 14px; margin: 8px 0 0 13px; color: #111; }
.cols { flex: 1; display: flex; min-height: 0; }
.side { width: 101px; background: linear-gradient(#2f3a49, #2d3649 60%, #2d3847); display: flex; flex-direction: column; color: #a3a9b3; font-size: 8px; }
.srow { display: flex; align-items: center; height: 33px; white-space: nowrap; }
.side .srow svg { width: 16px; height: 15px; margin: 0 3px 0 0; }
.side .search { height: 32px; } .side .search svg { width: 16px; }
.side .head { height: 24px; padding-left: 5px; font-size: 8.400px; }
.side .head + .srow { height: 29px; margin-bottom: 2px; }
.sfoot { margin-top: auto; border-top: 1px solid #5a6573; height: 23px; display: flex; justify-content: flex-end; padding: 4px 5px 0 0; color: #a3a9b3; }
.sfoot svg { width: 15px; height: 13px; }
.main { flex: 1; display: flex; flex-direction: column; min-width: 0; }
.navbar { height: 27px; flex: none; background: #2e3847; display: flex; align-items: center; border-bottom: 1px solid #4f5967; color: #c4c8ce; }
.sliver { width: 12px; height: 26px; background: #969ba5; margin-left: 2px; border-radius: 3px 0 0 0; flex: none; }
.more { margin-left: 747px; width: 11px; height: 7px; margin-top: -2px; }
.feedback { margin-left: 33px; width: 57px; height: 19px; background: #15569f; font-size: 9.700px; line-height: 20px; text-align: center; margin-top: 1px; }
.content { flex: 1; display: flex; min-height: 0; overflow: hidden; background: #8b95a4; }
.lower { margin-top: 413px; height: 20px; display: flex; font-size: 8px; color: #2c3644; width: 641px; margin-left: 20px; gap: 20px; background: #7f8c9f; flex: none; white-space: nowrap; }
.lnotes { width: 193px; background: #8c96a5; padding-left: 13px; display: flex; gap: 127px; line-height: 5px; overflow: hidden; }
.lprob { display: flex; align-items: center; padding-left: 11px; height: 15px; }
.lprob b { width: 37px; height: 11px; border-radius: 5px; background: #5656a3; color: #c3c3e6; font-weight: 500; text-align: center; line-height: 12px; font-size: 7.500px; margin-right: 11px; }
.lprob span { font-size: 7.900px; margin-right: 9px; } .lprob span + span + span { margin-left: 3px; }
.right { width: 193px; flex: none; display: flex; flex-direction: column; font-size: 8px; color: #2a3340; }
.card { background: linear-gradient(135deg, #8f97a4, #989da8); position: relative; flex: none; border-radius: 0 0 3px 3px; }
.vit { height: 189px; } .chart { width: 193px; height: 189px; padding-left: 3px; }
.stamp { position: absolute; right: 12px; top: 64.500px; display: flex; flex-direction: column; text-align: right; line-height: 10.500px; color: #4d5664; font-size: 7.200px; }
.labs { margin-top: 11px; height: 83px; padding: 4px 7px 0; }
.pager { display: flex; margin-left: auto; width: 55px; height: 17px; border: 1px solid #7c8492; }
.pager i { flex: 1; border-left: 1px solid #7c8492; text-align: center; line-height: 14px; font-size: 6px; }
.labs hr { border: 0; border-top: 1px solid #7f8896; margin: 20px 0 9px; }
.bar { background: #7b8a9f; height: 24px; border-radius: 4px; }
.rad { margin-top: 12px; height: 160px; padding: 19px 7px 0; }
.rad .bar { height: 23px; text-align: right; padding-right: 9px; line-height: 23px; border-radius: 4px 4px 0 0; font-size: 7.700px; }
.rrow { height: 15px; display: flex; justify-content: space-between; padding: 4px 8px 0 0; font-style: italic; font-size: 8.200px; line-height: 9px; }
.rrow.tall { height: 29.300px; padding-top: 6px; background: #858f9f; } .rrow.tall + .tall { background: none; }
.rrow u { white-space: nowrap; width: 124px; display: flex; justify-content: flex-end; } .rrow:not(.tall) u { justify-content: flex-start; }
.rrow:last-child { background: #858f9f; padding-top: 5px; }
.gutter { margin-left: auto; width: 8px; background: linear-gradient(90deg, #98a1af, #9a9da4); }
.vscroll { width: 4px; background: #f1f1f1; } .vscroll i { display: block; height: 79px; margin-top: 35px; background: #c4c4c4; }
.rail, .crail { flex: 1; overflow: hidden; background: #f8f8f8; display: flex; flex-direction: column; color: #555; }
.rail { padding: 6px 0 0 8px; }
.rail svg { width: 13px; height: 13px; margin-bottom: 14px; }
.rail hr { border: 0; border-top: 1px solid #ccc; margin: 0 0 17px -4px; width: 14px; flex: none; }
.rail .pl { width: 9px; height: 9px; margin: 0 0 18px 2px; }
.rail .gr { margin: 312px 0 0 2px; color: #333; }

.modal { position: absolute; left: 108px; top: 63.600px; width: 754.700px; height: 454px; background: #fff; border-radius: 5px; display: flex; flex-direction: column; overflow: hidden; }
.mhead { height: 30px; flex: none; background: #06a3de; color: #eefaff; display: flex; align-items: center; justify-content: space-between; padding: 0 6.500px 1px 27.500px; font-size: 9.950px; }
.mhead svg { width: 13px; height: 13px; color: #35607a; margin-top: 1px; }
.viewer { margin: 8px 6px 0 8px; height: 368px; display: flex; flex: none; }
.well { width: 728.500px; background: #e6e6e6; overflow: hidden; padding: 2.400px 0 0 94px; }
.page { width: 540px; height: 600px; background: #fff; box-shadow: -1px 0 1px #c3c3c3, 1px 0 2px #bbb; font-family: "Liberation Sans", Arial, sans-serif; color: #000; position: relative; }
.run { height: 29.100px; display: grid; grid-template-columns: 172px 168px 103.500px 53px; padding-left: 21.700px; font-size: 7px; color: #9aa0a9; line-height: 27px; white-space: nowrap; }
.pbrand { width: 53px; height: 14px; margin-top: 11px; }
.card-id { margin: 0 22px 0 22px; height: 87.500px; border: 1px solid #d3dfec; border-radius: 4px; background: linear-gradient(90deg, #f4f9fd, #fbfcfd); display: flex; justify-content: space-between; padding: 5px 9px 0 8.300px; }
.prov, .pat { display: flex; flex-direction: column; font-size: 10.560px; line-height: 11.700px; color: #111; white-space: nowrap; }
.altea { width: 139px; height: 33px; margin: 0 0 5.800px 5.700px; }
.pat { text-align: right; }
.pat strong { font-weight: 400; font-size: 14.200px; line-height: 17.500px; }
h1 { margin: 0; padding-top: 2px; text-align: center; font-weight: 400; font-size: 13.350px; line-height: 16px; color: #111; width: 540px; }
.sec { margin: 0 17px 0 18px; border-top: 1px solid #c9d8ea; padding-left: 3.700px; }
.sec.first { border: 0; height: 22.600px; padding-top: 1.300px; }
.sec h2 { margin: 0; font-weight: 400; font-size: 8.780px; line-height: 9.750px; color: #1b7a9c; }
.sec p { margin: 0; height: 9.750px; font-size: 8.735px; line-height: 9.750px; white-space: pre; color: #161616; }
.hist { padding-top: 1.500px; } .hist h2 { margin-bottom: .500px; } .meds { height: 12px; padding-top: 2px; margin-top: 1.500px; } .pmh { padding-top: 2px; }
.prow { display: grid; grid-template-columns: 44.500px 264px 28.500px 57px 48px 60px; font-size: 8.800px; line-height: 9px; margin-top: -.300px; white-space: nowrap; color: #222; }
.prow b { font-weight: 400; color: #000; } .prow i { color: #777; font-size: 8.400px; }
.track { flex: 1; position: relative; background: #fdfdfd; display: flex; flex-direction: column; align-items: center; }
.au, .ad { width: 0; border: 3.300px solid transparent; }
i.au { border-bottom: 5px solid #858585; border-top: 0; margin-top: 5.500px; margin-right: 2px; }
i.ad { border-top: 5px solid #858585; border-bottom: 0; margin-top: auto; margin-bottom: 5px; margin-right: 2px; }
.thumb { width: 6px; height: 59px; border-radius: 3px; background: #8f8f8f; margin: 5px 2px 0 0; }
.pamela .thumb { height: 35px; background: #6a6a6a; }
.mfoot { display: flex; justify-content: space-between; padding: 19px 101px 0 100px; }
.mfoot button { width: 185px; height: 19px; border: 0; padding: 0; color: #e6f3ff; font: 500 9.400px Roboto, sans-serif; border-radius: 1px; }
.b1 { background: #0070d6; } .mfoot .b1 { font-style: italic; } .b2 { background: #0686b9; }
.cursor { position: absolute; width: 10px; height: 11px; left: 705px; top: 69px; }
.pamela .cursor { left: 737px; top: 65px; }
.share { position: absolute; left: 250px; top: -8px; width: 720px; height: 10px; border-radius: 4px; background: #252525; box-shadow: 10px 12px 60px 12px rgba(0, 0, 0, .28); }

/* Chart window: captured wider than tall, so its canvas is stretched sideways. */
.chart-win { position: absolute; left: 28px; top: 418px; width: 818px; height: 354px; overflow: hidden; box-shadow: -1px 0 #1c1f26; }
.cw { width: 654.400px; height: 354px; transform: scaleX(1.25); transform-origin: 0 0; position: relative; display: flex; flex-direction: column; background: #f4f5f7; }
.caddr { height: 19px; flex: none; display: flex; align-items: center; color: #444; padding-top: 2px; background: #f5f5f5; }
.caddr svg { width: 8px; height: 8px; }
.caddr > svg:first-child { margin-left: 8px; } .caddr > svg + svg { margin-left: 10.500px; }
.cpill { margin-left: 8.500px; width: 481px; height: 13px; border-radius: 6px; background: #fff; display: flex; align-items: center; padding: 0 6px 0 7px; color: #777; }
.cpill span { margin-left: 6px; font: 5.900px "Open Sans", sans-serif; color: #333; }
.cpill i { color: #888; }
.cpill .push { margin-right: 9px; }
.caddr > svg.cpz { margin-left: 10.500px; } .caddr > b { width: 1px; height: 7px; background: #ccc; margin: 0 6px; }
.ctools { display: flex; gap: 11.200px; } .caddr > svg.ccp { margin-left: 9px; width: 10px; height: 10px; }
.cbody { height: 315px; display: flex; flex: none; }
.capp { margin-left: 1.600px; width: 638px; display: flex; flex-direction: column; background: #fff; border-radius: 4px; overflow: hidden; }
.chead { height: 21px; flex: none; display: flex; align-items: flex-start; font-size: 5.400px; color: #222; }
.cbrand { width: 57px; height: 14.500px; margin: 3px .600px 0 2.400px; }
.csite { margin-left: 382px; width: 58px; padding-top: 2.500px; display: flex; flex-direction: column; align-items: flex-end; line-height: 7.300px; white-space: nowrap; text-align: right; font-weight: 500; }
.csite i { font-style: italic; color: #555; font-weight: 400; } .csite em { display: inline-block; border: 4px solid transparent; border-top: 3px solid #111; border-bottom: 0; margin-left: 1px; vertical-align: 1px; }
.csite span { font-size: 5.300px; margin-right: 1px; }
.cav { margin: 3px 0 0 2px; width: 14.500px; height: 15px; border-radius: 50%; border: 1px solid #3585c8; text-align: center; line-height: 13.500px; font-size: 6px; color: #2b78bd; flex: none; }
.cwho { margin-left: 4px; padding-top: 3.500px; display: flex; flex-direction: column; line-height: 7.600px; font-size: 5.300px; color: #555; width: 63.500px; white-space: nowrap; }
.crx { font-size: 9px; line-height: 12px; margin: 2px 0 0 3.500px; width: 16px; white-space: nowrap; letter-spacing: -.4px; color: #114a7e; } .crx small { font-size: 6px; vertical-align: 1px; } .crx sub { font-size: 7.500px; vertical-align: -2px; }
.cfax { width: 9px; height: 9px; margin: 5.500px 0 0 7px; color: #1a5a8f; } .cgear { width: 9.500px; height: 10px; margin: 5px 0 0 10.500px; }
.ccols { display: flex; flex: 1; min-height: 0; }
.cside { width: 68.800px; background: linear-gradient(#2c3849, #2c3449); color: #dadde2; font-size: 5.100px; display: flex; flex-direction: column; border-radius: 0 0 0 4px; font-weight: 500; flex: none; }
.cside .srow { height: 21.200px; padding-left: 4px; } .cside .srow svg { width: 10.500px; height: 10.500px; margin-right: 1.500px; }
.cside .search { height: 19px; } .cside .head { height: 16px; padding-left: 6.400px; font-size: 5.400px; } .cside .head + .srow { height: 19px; }
.cside .sfoot { height: 15px; padding: 2.500px 2.500px 0 0; } .cside .sfoot svg { width: 9.500px; height: 9px; }
.cmain { flex: 1; display: flex; flex-direction: column; min-width: 0; }
.ctabs { height: 17px; flex: none; background: #2b3444; display: flex; align-items: stretch; padding: 1px 0 .500px; font-size: 5.050px; font-weight: 500; color: #3a3a3a; }
.step { width: 16px; background: #fff; text-align: center; line-height: 13px; font-size: 9px; margin-right: 1px; color: #000; font-weight: 700; flex: none; }
.ctab { background: #c9c9c9; display: flex; align-items: center; margin-right: .800px; white-space: nowrap; border-radius: 2px 2px 0 0; padding: 0 7px .800px 6.800px; flex: none; }
.ctab svg { width: 7px; height: 7px; color: #999; margin-left: auto; }
.ctab b { width: 10px; height: 10px; border-radius: 50%; background: #000; color: #ddd; text-align: center; line-height: 10.500px; font-size: 4.600px; flex: none; }
.ctab b + span { margin-left: 1px; }
.t0 { width: 18.400px; padding: 0 8px .800px 0; } .t1 { width: 95.500px; } .t2 { width: 83.200px; } .t3 { width: 85.600px; padding-left: 25px; } .t4 { width: 84px; } .t5 { width: 82.400px; background: #fff; padding-right: 5px; }
.t4 b + span { margin-left: 12.500px; } .t5 b + span { margin-left: 7.500px; } .t3, .t4, .t5 { font-size: 5.300px; }
.ctab.t5 svg { color: #666; }
.step.nx { margin-left: 0; width: 15px; margin-right: 0; }
.cmore { color: #dfe3e8; margin: 3px 18.500px 0 9.500px; width: 8px; height: 6px; }
.cfb { background: #0070d6; color: #fff; height: 11.500px; width: 37px; text-align: center; line-height: 12px; margin-top: 2px; font-size: 6.300px; }
.cscroll { flex: 1; overflow: hidden; background: linear-gradient(90deg, #f3f4f5 6.500px, #e7ebec 6.500px, #e7ebec 562px, #fdfdfd 562px); padding-left: 13.500px; min-height: 0; }
.vitals { background: #fff; width: 541.600px; height: 72.500px; display: flex; gap: 3.400px; padding: 0 4px; }
.vcard { width: 131px; height: 63px; border: 1px solid #eee; border-top: 0; border-radius: 0 0 5px 5px; position: relative; }
.vcard svg { width: 131px; height: 63px; margin-left: -1px; }
.vt { position: absolute; inset: 1px 4px auto 5px; display: flex; justify-content: space-between; font-size: 4.900px; color: #888; }
.vt strong { color: #222; font-size: 5.800px; margin-top: 1px; } .vt small { font-weight: 400; font-size: 5px; color: #888; }
.vt span { margin-left: auto; text-align: right; display: flex; flex-direction: column; } .vt b { color: #222; font-size: 5.600px; margin-top: 3px; margin-right: -1px; }
.panels { display: flex; gap: 10.400px; margin-top: 9px; width: 541.600px; align-items: flex-start; font-size: 5.180px; line-height: 7.650px; color: #36404c; font-weight: 500; }
.panel { background: #fff; width: 127.600px; position: relative; padding: 0 4.500px; flex: none; }
.pnotes, .pprob { height: 196px; overflow: hidden; }
.stackp { display: flex; flex-direction: column; gap: 8.500px; }
.ph { height: 16px; display: flex; align-items: center; padding-bottom: 1.500px; }
h3 { margin: 0; font-size: 6.900px; color: #2c7186; white-space: nowrap; font-weight: 400; } h3 small { color: #888; font-size: 5.400px; }
.add { width: 6px; height: 7px; color: #1787a8; margin-left: 4px; } .add :deep(path) { stroke-width: 3; }
.drop { margin-left: auto; border: 1px solid #ccc; width: 43.500px; height: 12px; line-height: 10px; text-align: center; font-size: 4.400px; margin-right: -1px; white-space: nowrap; }
.tog { margin-left: auto; display: flex; border: 1px solid #8aa; height: 8.500px; width: 47px; font-size: 4.400px; line-height: 6.500px; text-align: center; color: #777; font-weight: 400; }
.tog i { flex: 1; } .tog .on { background: #d5eefa; color: #2c7186; border-right: 1px solid #8aa; }
.th { background: #cddaea; height: 14px; line-height: 13.500px; border-radius: 2px 2px 0 0; }
.th, .tr { display: grid; padding-left: 3.500px; white-space: nowrap; }
.g-notes { grid-template-columns: 23.500px 64px 1fr; }
.tr.g-notes { height: 18.670px; padding-top: 1.500px; } .th.g-notes span:nth-child(2) { padding-left: 8.500px; }
.alt { background: #e6eaee; } .lite { color: #606a75; font-weight: 400; }
.enc { display: flex; gap: 1.300px; } .enc svg { width: 6px; height: 6px; margin-top: .800px; }
.pg { display: flex; width: 46px; height: 10.500px; border: 1px solid #ddd; margin-left: auto; color: #888; font-size: 4.500px; line-height: 8.500px; } .pg i { flex: 1; text-align: center; border-right: 1px solid #ddd; } .pg .on { background: #0686b9; color: #fff; }
.hand { position: absolute; width: 7px; height: 9px; left: 60px; top: 32.500px; }
.g-prob { grid-template-columns: 31px 40.500px 22px 1fr; } .tr.g-prob { padding: 1.600px 0 1.900px 3.500px; }
.code { display: flex; align-items: center; } .code b { background: #9391f5; color: #eef; width: 23.500px; height: 7.500px; border-radius: 4px; text-align: center; line-height: 8px; margin: auto 0; }
.pmeds { height: 36px; } .pmeds .ph { height: 17px; }
.miniRx { color: #1b6c9c; font-weight: 700; margin-left: 6.500px; font-size: 5.200px; }
.g-med { grid-template-columns: 57.500px 22.500px 1fr; }
.pall { height: 64.500px; } .pall .ph { height: 12.500px; padding: .500px 0 0; } .g-all { grid-template-columns: 56px 32px 1fr; } .tr.g-all { height: 10.900px; line-height: 11px; font-style: italic; }
.plabs { height: 51px; } .nolabs { display: flex; padding: 1.500px 0 0; } .nolabs span { margin: 1px 0 0 30.500px; } .nolabs .pg { width: 36px; height: 11px; }
.plabs hr { border: 0; border-top: 1px solid #ddd; margin: 12.500px 0 6px; } .plabs .th { height: 15px; line-height: 15px; }
.prad { height: 150px; } .prad .ph { height: 12.500px; padding: 1px 0 0; } .g-rad { grid-template-columns: 88.500px 1fr; } .tr.g-rad { font-style: italic; padding-top: 2px; padding-bottom: 1.370px; }
.cvs { width: 3.200px; } .cvs i { display: block; margin-top: 30px; height: 51px; background: #c8c8c8; border-radius: 2px; }
.crail { padding: 5px 0 0 3.500px; margin-left: 2.500px; background: #f5f6f7; }
.crail svg { width: 8.500px; height: 8px; margin-bottom: 9px; flex: none; } .crail hr { border: 0; border-top: 1px solid #ccc; width: 10px; margin: 1px 0 10px -3px; flex: none; }
.crail .pl { margin-left: 1px; width: 6px; height: 6px; } .crail .gr { margin-top: 202px; color: #444; }
.taskbar { flex: 1; background: linear-gradient(90deg, #dadcdf, #d5dbe5 50%, #dcdee2); display: flex; align-items: center; color: #333; font-size: 5.400px; padding-top: 1px; }
.wi { width: 12px; height: 11px; margin-left: 8px; } .wt { display: flex; flex-direction: column; line-height: 7px; margin-left: 2px; width: 55px; margin-right: 114.700px; font-size: 5.100px; }
.start { width: 10.500px; height: 11.500px; } .find { margin-left: 6.500px; width: 93px; height: 13px; border-radius: 6px; background: #f3f4f6; display: flex; align-items: center; padding-left: 4px; font-size: 6.200px; gap: 4px; overflow: hidden; } .find > svg { width: 7px; height: 7px; }
.find b { margin-left: auto; background: #e2dfdb; width: 24px; height: 13px; padding-left: 7px; padding-top: 2px; border-radius: 6px; } .find b svg { width: 10px; height: 9px; }
.apps { display: flex; margin-left: 3.500px; gap: 3.100px; } .apps span { width: 15.900px; height: 18px; padding: 4px 2.800px 0; position: relative; border-radius: 2px; } .apps svg { width: 10.200px; height: 10.500px; }
.apps .open { background: rgba(255, 255, 255, .6); } .apps .open::after, .apps .run::after { content: ""; position: absolute; left: 4px; bottom: 0; width: 7px; height: 2px; background: #1976d2; border-radius: 1px; } .apps .run::after { left: 6.500px; width: 3px; height: 1.500px; background: #888; }
.apps .run { height: 18px; line-height: normal; }
.tray { margin-left: auto; display: flex; gap: 6px; color: #333; } .tray svg { width: 7.500px; height: 7.500px; } .tray2 { display: flex; gap: 3.500px; margin-left: 6.500px; } .tray2 svg { width: 7px; height: 7px; }
.clock { margin-left: 6px; line-height: 6.500px; text-align: right; display: flex; flex-direction: column; width: 22px; } .bell { width: 7px; height: 7px; margin: 0 2px 0 3px; }
.share3 { position: absolute; left: 155.500px; top: -8px; width: 473px; height: 10.500px; border-radius: 4px; background: #222; box-shadow: 0 4px 14px 3px rgba(0, 0, 0, .2); }
</style>
